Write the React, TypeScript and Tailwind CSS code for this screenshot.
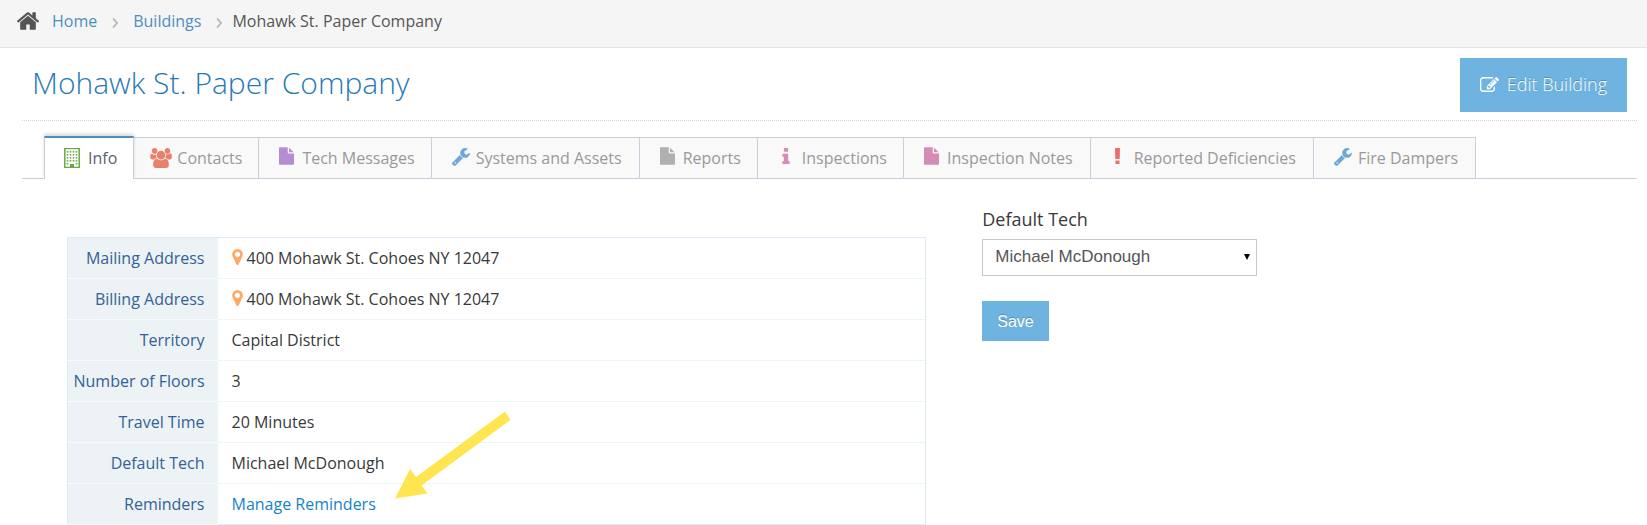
import type { ReactNode } from "react";

type IconProps = { className?: string };

function Glyph({ box, d, className }: { box: string; d: string; className?: string }) {
  return (
    <svg viewBox={box} fill="currentColor" aria-hidden="true" className={className}>
      <path d={d} />
    </svg>
  );
}

const HomeIcon = ({ className }: IconProps) => (
  <Glyph
    className={className}
    box="89 253 1614 1283"
    d="M1472 992v480q0 26-19 45t-45 19h-384v-384h-256v384h-384q-26 0-45-19t-19-45v-480q0-1 .5-3t.5-3l575-474 575 474q1 2 1 6zm223-69l-62 74q-8 9-21 11h-3q-13 0-21-7l-692-577-692 577q-12 8-24 7-13-2-21-11l-62-74q-8-10-7-23.5t11-21.5l719-599q32-26 76-26t76 26l244 204v-195q0-14 9-23t23-9h192q14 0 23 9t9 23v408l219 182q10 8 11 21.5t-7 23.5z"
  />
);

const EditIcon = ({ className }: IconProps) => (
  <Glyph
    className={className}
    box="0 128 1792 1408"
    d="M888 1184l116-116-152-152-116 116v56h96v96h56zm440-720q-16-16-33 1l-350 350q-17 17-1 33t33-1l350-350q17-17 1-33zm80 594v190q0 119-84.5 203.5t-203.5 84.5h-832q-119 0-203.5-84.5t-84.5-203.5v-832q0-119 84.5-203.5t203.5-84.5h832q63 0 117 25 15 7 18 23 3 17-9 29l-49 49q-14 14-32 8-23-6-45-6h-832q-66 0-113 47t-47 113v832q0 66 47 113t113 47h832q66 0 113-47t47-113v-126q0-13 9-22l64-64q15-15 35-7t20 29zm-96-738l288 288-672 672h-288v-288zm444 132l-92 92-288-288 92-92q28-28 68-28t68 28l152 152q28 28 28 68t-28 68z"
  />
);

const UsersIcon = ({ className }: IconProps) => (
  <Glyph
    className={className}
    box="0 0 1920 1792"
    d="M593 896q-162 5-265 128h-134q-82 0-138-40.5t-56-118.500q0-353 124-353 6 0 43.5 21t97.5 42.500 119 21.500q67 0 133-23-5 37-5 66 0 159 93 293zm1071 637q0 120-73 189.500t-194 69.500h-874q-121 0-194-69.500t-73-189.500q0-53 3.500-103.500t14-109 26.500-108.500 43-97.500 62-81 85.500-53.500 111.500-20q10 0 43 21.500t73 48 107 48 135 21.500 135-21.500 107-48 73-48 43-21.500q61 0 111.500 20t85.500 53.500 62 81 43 97.500 26.500 108.500 14 109 3.500 103.500zm-1024-1277q0 106-75 181t-181 75-181-75-75-181 75-181 181-75 181 75 75 181zm704 384q0 159-112.500 271.500t-271.500 112.500-271.500-112.500-112.500-271.500 112.500-271.500 271.500-112.500 271.500 112.500 112.500 271.500zm576 225q0 78-56 118.500t-138 40.500h-134q-103-123-265-128 93-134 93-293 0-29-5-66 66 23 133 23 59 0 119-21.500t97.500-42.500 43.500-21q124 0 124 353zm-128-609q0 106-75 181t-181 75-181-75-75-181 75-181 181-75 181 75 75 181z"
  />
);

const FileIcon = ({ className }: IconProps) => (
  <Glyph
    className={className}
    box="128 0 1536 1792"
    d="M1152 512v-472q22 14 36 28l408 408q14 14 28 36h-472zm-128 32q0 40 28 68t68 28h544v1056q0 40-28 68t-68 28h-1344q-40 0-68-28t-28-68v-1600q0-40 28-68t68-28h800v544z"
  />
);

const WrenchIcon = ({ className }: IconProps) => (
  <Glyph
    className={className}
    box="85 128 1641 1643"
    d="M448 1472q0-26-19-45t-45-19-45 19-19 45 19 45 45 19 45-19 19-45zm644-420l-682 682q-37 37-90 37-52 0-91-37l-106-108q-38-36-38-90 0-53 38-91l681-681q39 98 114.5 173.500t173.500 114.500zm634-435q0 39-23 106-47 134-164.500 217.500t-258.500 83.500q-185 0-316.500-131.500t-131.500-316.500 131.500-316.500 316.500-131.500q58 0 121.500 16.500t107.500 46.500q16 11 16 28t-16 28l-293 169v224l193 107q5-3 79-48.500t135.500-81 70.500-35.500q15 0 23.500 10t8.500 25z"
  />
);

const InfoIcon = ({ className }: IconProps) => (
  <Glyph
    className={className}
    box="576 128 640 1408"
    d="M1216 1344v128q0 26-19 45t-45 19h-512q-26 0-45-19t-19-45v-128q0-26 19-45t45-19h64v-384h-64q-26 0-45-19t-19-45v-128q0-26 19-45t45-19h384q26 0 45 19t19 45v576h64q26 0 45 19t19 45zm-128-1152v192q0 26-19 45t-45 19h-256q-26 0-45-19t-19-45v-192q0-26 19-45t45-19h256q26 0 45 19t19 45z"
  />
);

const PinIcon = ({ className }: IconProps) => (
  <Glyph
    className={className}
    box="384 128 1024 1536"
    d="M1152 640q0-106-75-181t-181-75-181 75-75 181 75 181 181 75 181-75 75-181zm256 0q0 109-33 179l-364 774q-16 33-47.500 52t-67.500 19-67.500-19-46.500-52l-365-774q-33-70-33-179 0-212 150-362t362-150 362 150 150 362z"
  />
);

const AlertIcon = ({ className }: IconProps) => (
  <Glyph className={className} box="0 0 5 16" d="M0 .5Q0 0 .5 0H4.5Q5 0 5 .5L4.7 10.500Q4.600 11 4.200 11H.8Q.4 11 .3 10.500ZM.5 12.500H4.500V16H.5Z" />
);

const BuildingIcon = ({ className }: IconProps) => (
  <svg viewBox="0 0 16 20" fill="currentColor" aria-hidden="true" className={className}>
    <path fillRule="evenodd" d="M.5 0H15.500Q16 0 16 .5V19.500Q16 20 15.500 20H.5Q0 20 0 19.500V.5Q0 0 .5 0ZM1.500 1.300V18.800H6V16H10V18.800H14.500V1.300Z" />
    {[3, 6, 9, 12].map((y) =>
      [3, 6, 9, 12].map((x) => <rect key={`${x}-${y}`} x={x - 0.3} y={y} width="1.600" height="1.600" />),
    )}
    <path d="M2.700 15H4.300V16.600H2.700ZM11.700 15H13.300V16.600H11.700Z" />
  </svg>
);

const Chevron = () => (
  <svg viewBox="0 0 6 10" fill="none" stroke="#b2b6bf" strokeWidth="1.7" aria-hidden="true" className="mt-1 h-[10px] w-[6px]">
    <path d="M1 .5 5 5 1 9.500" />
  </svg>
);

const tabs: { label: string; icon: ReactNode; space: string }[] = [
  { label: "Contacts", icon: <UsersIcon className="h-5 w-[22px] text-[#e8806c]" />, space: "gap-[5px] pl-4 pr-4" },
  { label: "Tech Messages", icon: <FileIcon className="mb-1 h-[18px] w-[15px] text-[#b78dd2]" />, space: "gap-2 pl-5 pr-4" },
  { label: "Systems and Assets", icon: <WrenchIcon className="mb-[2px] h-[18px] w-[18px] text-[#6fa8d8]" />, space: "gap-[6px] pl-5 pr-[17px]" },
  { label: "Reports", icon: <FileIcon className="mb-1 h-[18px] w-[15px] text-[#b0b0b0]" />, space: "gap-2 pl-5 pr-4" },
  { label: "Inspections", icon: <InfoIcon className="mb-1 h-4 w-2 text-[#d48bb4]" />, space: "gap-3 pl-6 pr-4" },
  { label: "Inspection Notes", icon: <FileIcon className="mb-1 h-[18px] w-[15px] text-[#d48bb4]" />, space: "gap-2 pl-5 pr-[17px]" },
  { label: "Reported Deficiencies", icon: <AlertIcon className="mb-1 h-4 w-[5px] text-[#e8706c]" />, space: "gap-[14px] pl-6 pr-[17px]" },
  { label: "Fire Dampers", icon: <WrenchIcon className="mb-[2px] h-[18px] w-[18px] text-[#6fa8d8]" />, space: "gap-[6px] pl-5 pr-[17px]" },
];

const Address = () => (
  <span className="flex items-center gap-1">
    <PinIcon className="mb-[2px] h-4 w-[11px] text-[#ffa966]" />
    400 Mohawk St. Cohoes NY 12047
  </span>
);

const rows: [string, ReactNode][] = [
  ["Mailing Address", <Address />],
  ["Billing Address", <Address />],
  ["Territory", "Capital District"],
  ["Number of Floors", "3"],
  ["Travel Time", "20 Minutes"],
  ["Default Tech", "Michael McDonough"],
  ["Reminders", <a href="#reminders" className="text-[#1583cc]">Manage Reminders</a>],
];

export default function App() {
  return (
    <div className="bg-white font-['Open_Sans',sans-serif] text-base text-[#393939]">
      <nav aria-label="Breadcrumb" className="flex h-12 items-center border-b border-[#e5e5e5] bg-[#f5f5f5] px-[17px] pb-[5px] text-[#555]">
        <HomeIcon className="mr-[13px] h-[18px] w-[22px]" />
        <ol className="flex items-center">
          <li className="flex items-center gap-[15px]">
            <a href="#home" className="text-[#4c8fbd]">Home</a>
            <Chevron />
          </li>
          <li className="ml-[15px] flex items-center gap-[15px]">
            <a href="#buildings" className="text-[#4c8fbd]">Buildings</a>
            <Chevron />
          </li>
          <li className="ml-[10px]">Mohawk St. Paper Company</li>
        </ol>
      </nav>

      <main>
        <header className="ml-[22px] mr-[10px] flex h-[73px] items-center justify-between border-b border-dotted border-[#d4d4d4] px-[10px]">
          <h1 className="pb-[2px] text-[30px] font-light leading-10 text-[#2679b5]">Mohawk St. Paper Company</h1>
          <button type="button" className="mt-[2px] flex h-[54px] items-center gap-2 bg-[#6fb3e0] px-5 pb-[2px] text-lg font-light text-white [text-shadow:0_-1px_0_rgba(0,0,0,0.25)]">
            <EditIcon className="h-[15px] w-[19px]" />
            Edit Building
          </button>
        </header>

        <div role="tablist" aria-label="Building sections" className="ml-[22px] mr-[10px] mt-[15px] flex items-end border-b border-[#c5d0dc] pl-[22px]">
          <button
            type="button"
            role="tab"
            aria-selected="true"
            className="z-10 -mb-px flex h-[43px] items-center gap-2 border-x border-t-2 border-[#c5d0dc] border-t-[#4c8fbd] bg-white pb-[2px] pl-[19px] pr-4 text-[#576373] shadow-[0_-2px_3px_0_rgba(0,0,0,0.15)]"
          >
            <BuildingIcon className="h-5 w-4 text-[#69aa46]" />
            Info
          </button>
          {tabs.map((tab) => (
            <button
              key={tab.label}
              type="button"
              role="tab"
              aria-selected="false"
              className={`flex h-[41px] items-center whitespace-nowrap border-r border-t border-[#c5d0dc] bg-[#f9f9f9] text-[#999] ${tab.space}`}
            >
              {tab.icon}
              {tab.label}
            </button>
          ))}
        </div>

        <div className="grid grid-cols-12 gap-x-14 px-[67px]">
          <table className="col-span-7 mt-[58px] w-full border-collapse self-start border border-[#dcebf7]">
            <tbody>
              {rows.map(([label, value]) => (
                <tr key={label} className="h-[41px]">
                  <th scope="row" className="w-[150px] whitespace-nowrap border-b border-b-[#f7fbff] bg-[#edf3f4] p-0 pr-[13px] text-right font-normal text-[#336199]">
                    {label}
                  </th>
                  <td className="border-b border-dotted border-b-[#dcebf7] p-0 pl-[14px]">{value}</td>
                </tr>
              ))}
            </tbody>
          </table>

          <form className="col-span-5 flex flex-col items-start pt-7" onSubmit={(e) => e.preventDefault()}>
            <label htmlFor="default-tech" className="text-lg leading-6">Default Tech</label>
            <div className="relative mt-2 w-[275px]">
              <select
                id="default-tech"
                defaultValue="Michael McDonough"
                className="h-[37px] w-full appearance-none border border-[#c8c8c8] bg-white pb-px pl-3 pr-6 font-['Liberation_Sans',Arial,sans-serif] text-[17px] leading-6 text-[#555]"
              >
                <option>Michael McDonough</option>
              </select>
              <svg viewBox="0 0 6 6" aria-hidden="true" className="pointer-events-none absolute right-[7px] top-[15px] h-[6px] w-[6px]">
                <path d="M0 0H6L3 6Z" />
              </svg>
            </div>
            <button type="submit" className="mt-[25px] h-10 bg-[#6fb3e0] px-[15px] pt-[2px] font-['Liberation_Sans',Arial,sans-serif] text-base text-white [text-shadow:0_-1px_0_rgba(0,0,0,0.25)]">
              Save
            </button>
          </form>
        </div>
      </main>

      <svg viewBox="0 0 116 88" aria-hidden="true" className="pointer-events-none absolute left-[395px] top-[411px] h-[88px] w-[116px]">
        <path fill="#ffe650" d="M110 0.500 115.500 9 26.500 74.500 32.500 82.500 0 87.500 15 58 21 66Z" />
      </svg>
    </div>
  );
}
